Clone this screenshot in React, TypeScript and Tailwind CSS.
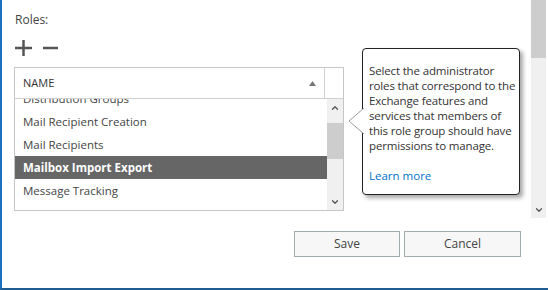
import { ChevronUp, ChevronDown } from 'lucide-react';

const roles = [
  'Distribution Groups',
  'Mail Recipient Creation',
  'Mail Recipients',
  'Mailbox Import Export',
  'Message Tracking',
  'Migration',
];

const selected = 'Mailbox Import Export';

export default function App() {
  return (
    <div
      className="w-[548px] h-[290px] flex bg-white border-l-2 border-l-[#1b70c2] border-b-2 border-b-[#1e5c92] text-[#333]"
      style={{ fontFamily: '"Open Sans", "Noto Sans", sans-serif' }}
    >
      {/* Main form area */}
      <div className="relative flex-1 flex flex-col pl-[12px] pr-[10px]">
        <div className="pt-[12px] pl-[1px] text-[12px] leading-[16px] text-[#444]">Roles:</div>

        {/* Add / remove */}
        <div className="mt-[12px] flex items-center gap-[11px] pl-[1px]">
          <svg width="17" height="16" viewBox="0 0 17 16">
            <rect x="0" y="6.75" width="17" height="2.5" fill="#555" />
            <rect x="7.25" y="0" width="2.5" height="16" fill="#555" />
          </svg>
          <svg width="15" height="16" viewBox="0 0 15 16">
            <rect x="0" y="6.75" width="15" height="2.5" fill="#555" />
          </svg>
        </div>

        {/* Roles table */}
        <div className="mt-[11px] w-[330px] h-[144px] border border-[#c6c6c6] flex flex-col">
          <div className="h-[31px] flex border-b border-[#d0d0d0] shrink-0">
            <div className="w-[310px] border-r border-[#d0d0d0] flex items-center justify-between pl-[8px] pr-[8px]">
              <span className="text-[11px] text-[#333]">NAME</span>
              <svg width="7" height="5" viewBox="0 0 7 5">
                <polygon points="3.5,0 7,5 0,5" fill="#777" />
              </svg>
            </div>
            <div className="flex-1" />
          </div>
          <div className="flex flex-1 min-h-0">
            <div className="flex-1 overflow-hidden">
              <div className="mt-[-12px]">
                {roles.map((r) => (
                  <div
                    key={r}
                    className={`h-[23px] flex items-center pl-[8px] text-[11.5px] whitespace-nowrap ${
                      r === selected ? 'bg-[#666666] text-white font-bold' : 'text-[#444]'
                    }`}
                  >
                    {r}
                  </div>
                ))}
              </div>
            </div>
            {/* list scrollbar */}
            <div className="w-[16px] bg-[#f0f0f0] flex flex-col">
              <div className="h-[17px] flex items-center justify-center">
                <ChevronUp size={10} strokeWidth={3} className="text-[#555]" />
              </div>
              <div className="flex-1">
                <div className="mt-[7px] h-[36px] bg-[#cdcdcd]" />
              </div>
              <div className="h-[17px] flex items-center justify-center">
                <ChevronDown size={10} strokeWidth={3} className="text-[#555]" />
              </div>
            </div>
          </div>
        </div>

        {/* Buttons */}
        <div className="mt-[20px] flex justify-end gap-[4px]">
          <button className="w-[106px] h-[26px] border border-[#a3abae] bg-[#f7f7f7] text-[12px] text-[#444]">
            Save
          </button>
          <button className="w-[117px] h-[26px] border border-[#a3abae] bg-[#f7f7f7] text-[12px] text-[#444]">
            Cancel
          </button>
        </div>

        {/* Help callout */}
        <div className="absolute left-[360px] top-[48px] w-[158px] h-[147px] bg-white border border-[#222] rounded-[4px] shadow-[3px_3px_4px_rgba(0,0,0,0.35)] pl-[6px] pt-[14px]">
          <svg className="absolute left-[-15px] top-[59px]" width="16" height="26" viewBox="0 0 16 26">
            <polygon points="16,0 1,13 16,26" fill="#fff" />
            <polyline points="16,0 1,13 16,26" fill="none" stroke="#9a9a9a" strokeWidth="1" />
          </svg>
          <p className="text-[11.5px] leading-[15px] tracking-[-0.15px] text-[#333] whitespace-nowrap">
            Select the administrator
            <br />
            roles that correspond to the
            <br />
            Exchange features and
            <br />
            services that members of
            <br />
            this role group should have
            <br />
            permissions to manage.
          </p>
          <a className="block mt-[15px] text-[11.5px] leading-[15px] text-[#0072c6]">Learn more</a>
        </div>
      </div>

      {/* Page scrollbar */}
      <div className="w-[15px] h-[218px] bg-[#f0f0f0] flex flex-col">
        <div className="h-[58px] bg-[#cdcdcd]" />
        <div className="flex-1" />
        <div className="h-[17px] flex items-center justify-center">
          <ChevronDown size={10} strokeWidth={3} className="text-[#555]" />
        </div>
      </div>
      <div className="w-[2px]" />
    </div>
  );
}
